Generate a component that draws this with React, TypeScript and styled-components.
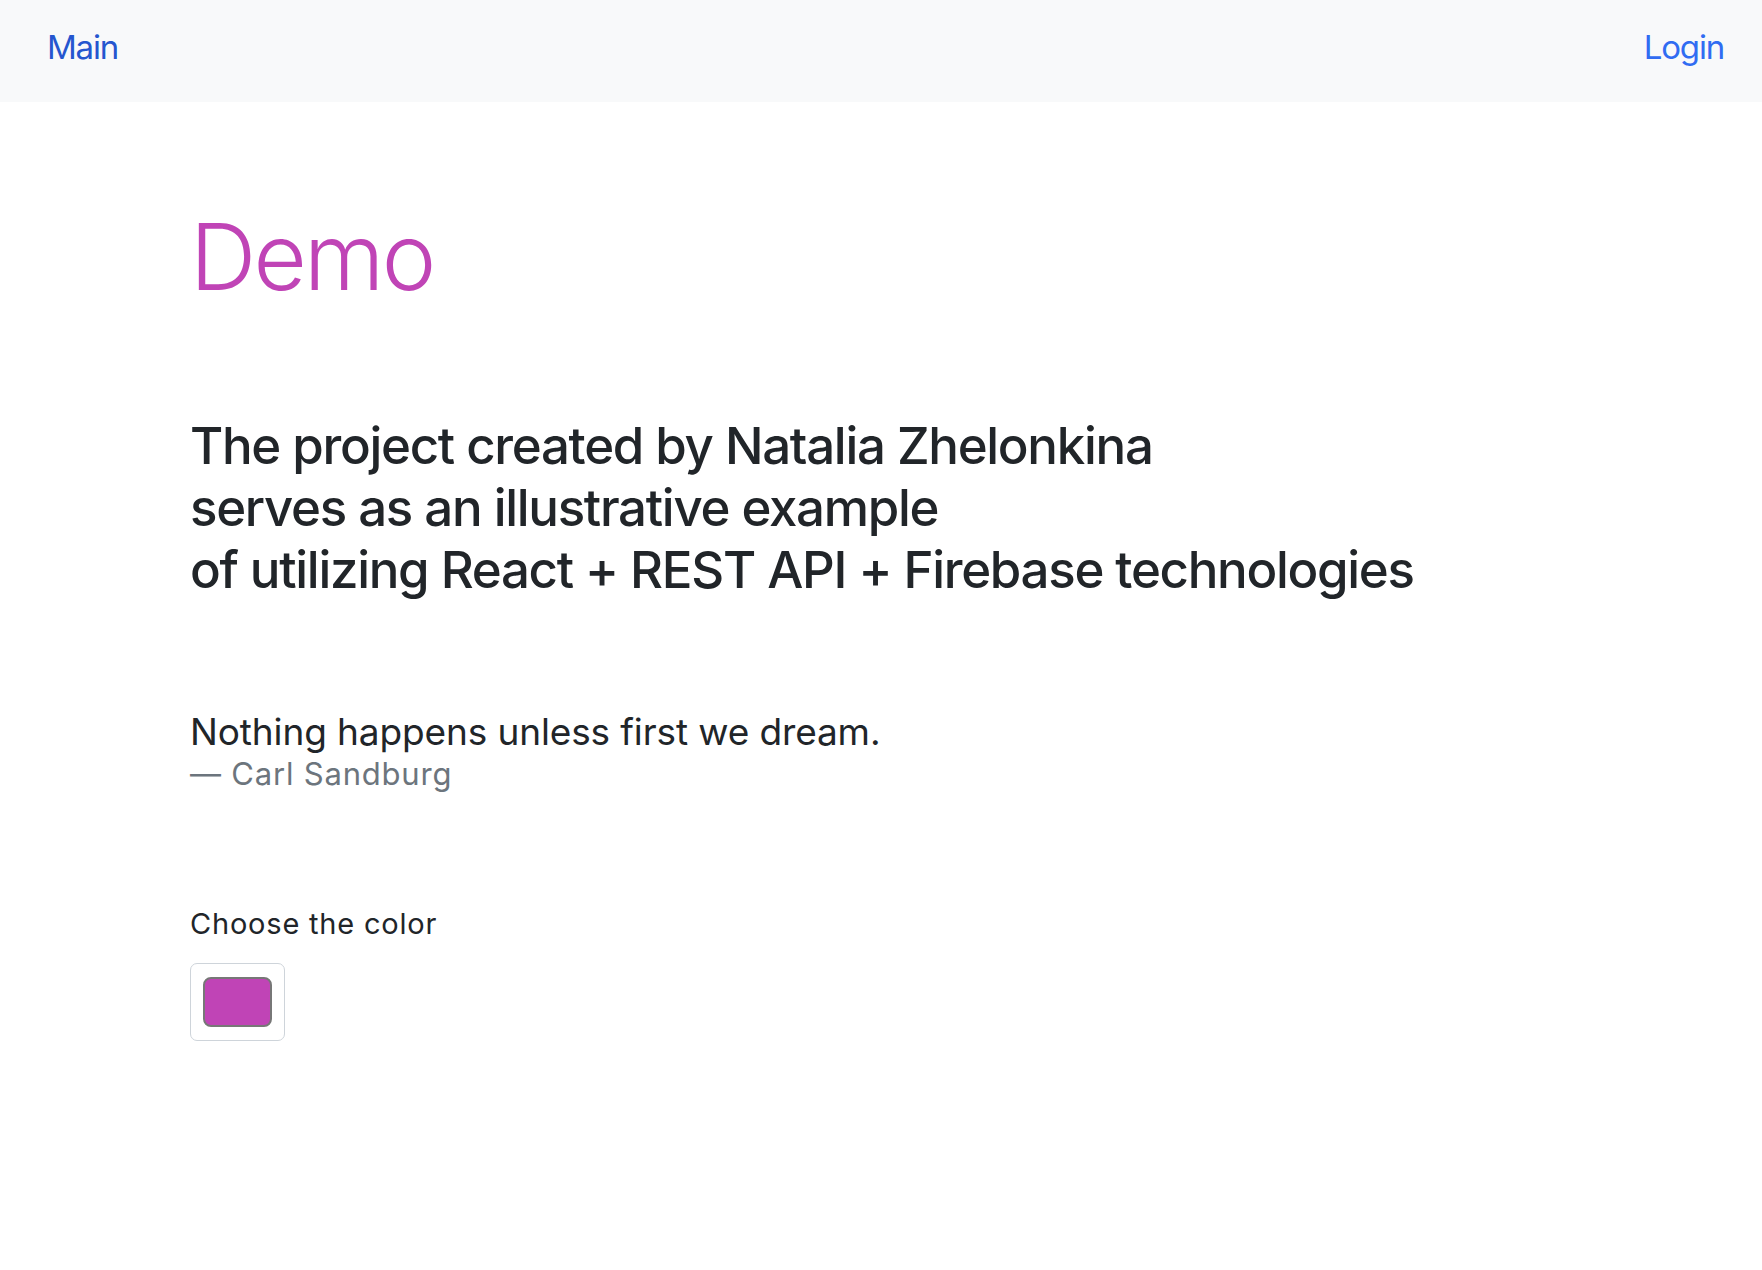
import React, { useState } from "react";
import styled, { createGlobalStyle } from "styled-components";

const GlobalStyle = createGlobalStyle`
  * { box-sizing: border-box; }
  html, body { margin: 0; padding: 0; background: #ffffff; }
  body {
    font-family: Inter, "Noto Sans", "Liberation Sans", sans-serif;
    color: #212529;
  }
`;

const Navbar = styled.nav`
  height: 102px;
  background: #f8f9fa;
  display: flex;
  align-items: flex-start;
  justify-content: space-between;
  padding: 23px 38px 0 47px;
`;

const NavLink = styled.a<{ $tone: "dark" | "light" }>`
  font-size: 33px;
  line-height: 49.5px;
  font-weight: 400;
  letter-spacing: -1.2px;
  text-decoration: none;
  color: ${(p) => (p.$tone === "dark" ? "#2556cf" : "#306cf2")};
  cursor: pointer;
`;

const Main = styled.main`
  padding: 0 0 0 190px;
  display: flex;
  flex-direction: column;
  align-items: flex-start;
`;

const Title = styled.h1<{ $color: string }>`
  margin: 100px 0 0;
  font-size: 92px;
  line-height: 110.4px;
  font-weight: 300;
  letter-spacing: -2.7px;
  color: ${(p) => p.$color};
`;

const Lead = styled.h2`
  margin: 103px 0 0;
  font-size: 51px;
  line-height: 62px;
  font-weight: 500;
  letter-spacing: -1.3px;
`;

const Figure = styled.figure`
  margin: 109px 0 0;
  display: flex;
  flex-direction: column;
`;

const Quote = styled.blockquote`
  margin: 0;
  font-size: 37px;
  line-height: 44.4px;
  font-weight: 400;
  letter-spacing: -0.12px;
`;

const Caption = styled.figcaption`
  font-size: 31px;
  line-height: 38px;
  color: #6c757d;
  letter-spacing: 0.8px;
`;

const Field = styled.div`
  margin-top: 110px;
  display: flex;
  flex-direction: column;
  gap: 18px;
`;

const Label = styled.label`
  font-size: 29px;
  line-height: 42px;
  font-weight: 400;
  letter-spacing: 0.8px;
`;

const ColorInput = styled.input`
  -webkit-appearance: none;
  appearance: none;
  width: 95px;
  height: 78px;
  padding: 13px 12px;
  margin: 0;
  border: 1.5px solid #ced4da;
  border-radius: 7px;
  background: #ffffff;
  cursor: pointer;

  &::-webkit-color-swatch-wrapper {
    padding: 0;
  }
  &::-webkit-color-swatch {
    border: 2px solid #777777;
    border-radius: 8px;
  }
`;

export default function App() {
  const [color, setColor] = useState("#c044b6");
  return (
    <>
      <GlobalStyle />
      <Navbar>
        <NavLink $tone="dark">Main</NavLink>
        <NavLink $tone="light">Login</NavLink>
      </Navbar>
      <Main>
        <Title $color={color}>Demo</Title>
        <Lead>
          The project created by Natalia Zhelonkina
          <br />
          serves as an illustrative example
          <br />
          of utilizing React + REST API + Firebase technologies
        </Lead>
        <Figure>
          <Quote>Nothing happens unless first we dream.</Quote>
          <Caption>— Carl Sandburg</Caption>
        </Figure>
        <Field>
          <Label htmlFor="color-picker">Choose the color</Label>
          <ColorInput
            id="color-picker"
            type="color"
            value={color}
            onChange={(e) => setColor(e.target.value)}
          />
        </Field>
      </Main>
    </>
  );
}
